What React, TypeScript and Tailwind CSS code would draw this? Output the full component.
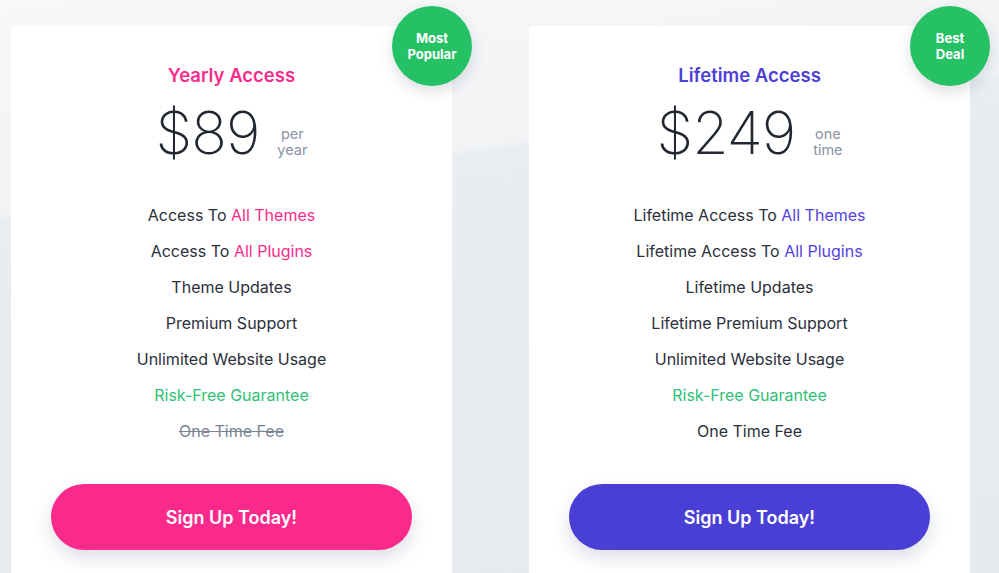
import React from "react";

const font = { fontFamily: "Inter, 'Open Sans', sans-serif" };

type Feature = { parts: { t: string; c?: string }[]; cls?: string };

function Card(props: {
  title: string;
  titleColor: string;
  price: string;
  unit: [string, string];
  features: Feature[];
  badge: [string, string];
  btn: string;
}) {
  return (
    <div className="relative w-[441px] h-[560px] bg-white rounded-t-[4px] flex flex-col items-center pt-[36px]">
      <div className="absolute right-[-20px] top-[-20px] w-[80px] h-[80px] rounded-full bg-[#26c165] shadow-[0_6px_14px_rgba(60,80,100,0.18)] flex flex-col items-center justify-center text-white text-[13px] font-bold leading-[16px]">
        <span>{props.badge[0]}</span>
        <span>{props.badge[1]}</span>
      </div>
      <div className={`text-[18.5px] font-semibold leading-[26px] ${props.titleColor}`}>{props.title}</div>
      <div className="flex items-center mt-[12px] h-[64px]">
        <span className="text-[59px] font-extralight text-[#222831] leading-none tracking-[-1px]">{props.price}</span>
        <span className="ml-[18px] mt-[20px] flex flex-col text-[14.5px] leading-[16px] text-[#8a93a2] items-center">
          <span>{props.unit[0]}</span>
          <span>{props.unit[1]}</span>
        </span>
      </div>
      <div className="mt-[39px] flex flex-col items-center gap-[12px] text-[16px] leading-[24px] text-[#2b303b]">
        {props.features.map((f, i) => (
          <div key={i} className={f.cls}>
            {f.parts.map((p, j) => (
              <span key={j} className={p.c}>{p.t}</span>
            ))}
          </div>
        ))}
      </div>
      <div className={`mt-[41px] w-[361px] h-[66px] rounded-full flex items-center justify-center text-white text-[18px] font-semibold shadow-[0_8px_18px_rgba(60,80,110,0.18)] ${props.btn}`}>
        Sign Up Today!
      </div>
    </div>
  );
}

export default function App() {
  const pink = "text-[#f72c8b]";
  const blue = "text-[#5343de]";
  return (
    <div
      style={font}
      className="w-[999px] h-[573px] overflow-hidden bg-[linear-gradient(172deg,#f7f8f9_0%,#f1f3f5_30%,#e9edf1_31%,#e6eaee_100%)] flex pl-[11px] pt-[26px] gap-[77px]"
    >
      <Card
        title="Yearly Access"
        titleColor={pink}
        price="$89"
        unit={["per", "year"]}
        badge={["Most", "Popular"]}
        btn="bg-[#fa2a8d]"
        features={[
          { parts: [{ t: "Access To " }, { t: "All Themes", c: pink }] },
          { parts: [{ t: "Access To " }, { t: "All Plugins", c: pink }] },
          { parts: [{ t: "Theme Updates" }] },
          { parts: [{ t: "Premium Support" }] },
          { parts: [{ t: "Unlimited Website Usage" }] },
          { parts: [{ t: "Risk-Free Guarantee" }], cls: "text-[#2fbf76]" },
          { parts: [{ t: "One Time Fee" }], cls: "text-[#7a8494] line-through" },
        ]}
      />
      <Card
        title="Lifetime Access"
        titleColor="text-[#4b3fd6]"
        price="$249"
        unit={["one", "time"]}
        badge={["Best", "Deal"]}
        btn="bg-[#4a3fd4]"
        features={[
          { parts: [{ t: "Lifetime Access To " }, { t: "All Themes", c: blue }] },
          { parts: [{ t: "Lifetime Access To " }, { t: "All Plugins", c: blue }] },
          { parts: [{ t: "Lifetime Updates" }] },
          { parts: [{ t: "Lifetime Premium Support" }] },
          { parts: [{ t: "Unlimited Website Usage" }] },
          { parts: [{ t: "Risk-Free Guarantee" }], cls: "text-[#2fbf76]" },
          { parts: [{ t: "One Time Fee" }] },
        ]}
      />
    </div>
  );
}
